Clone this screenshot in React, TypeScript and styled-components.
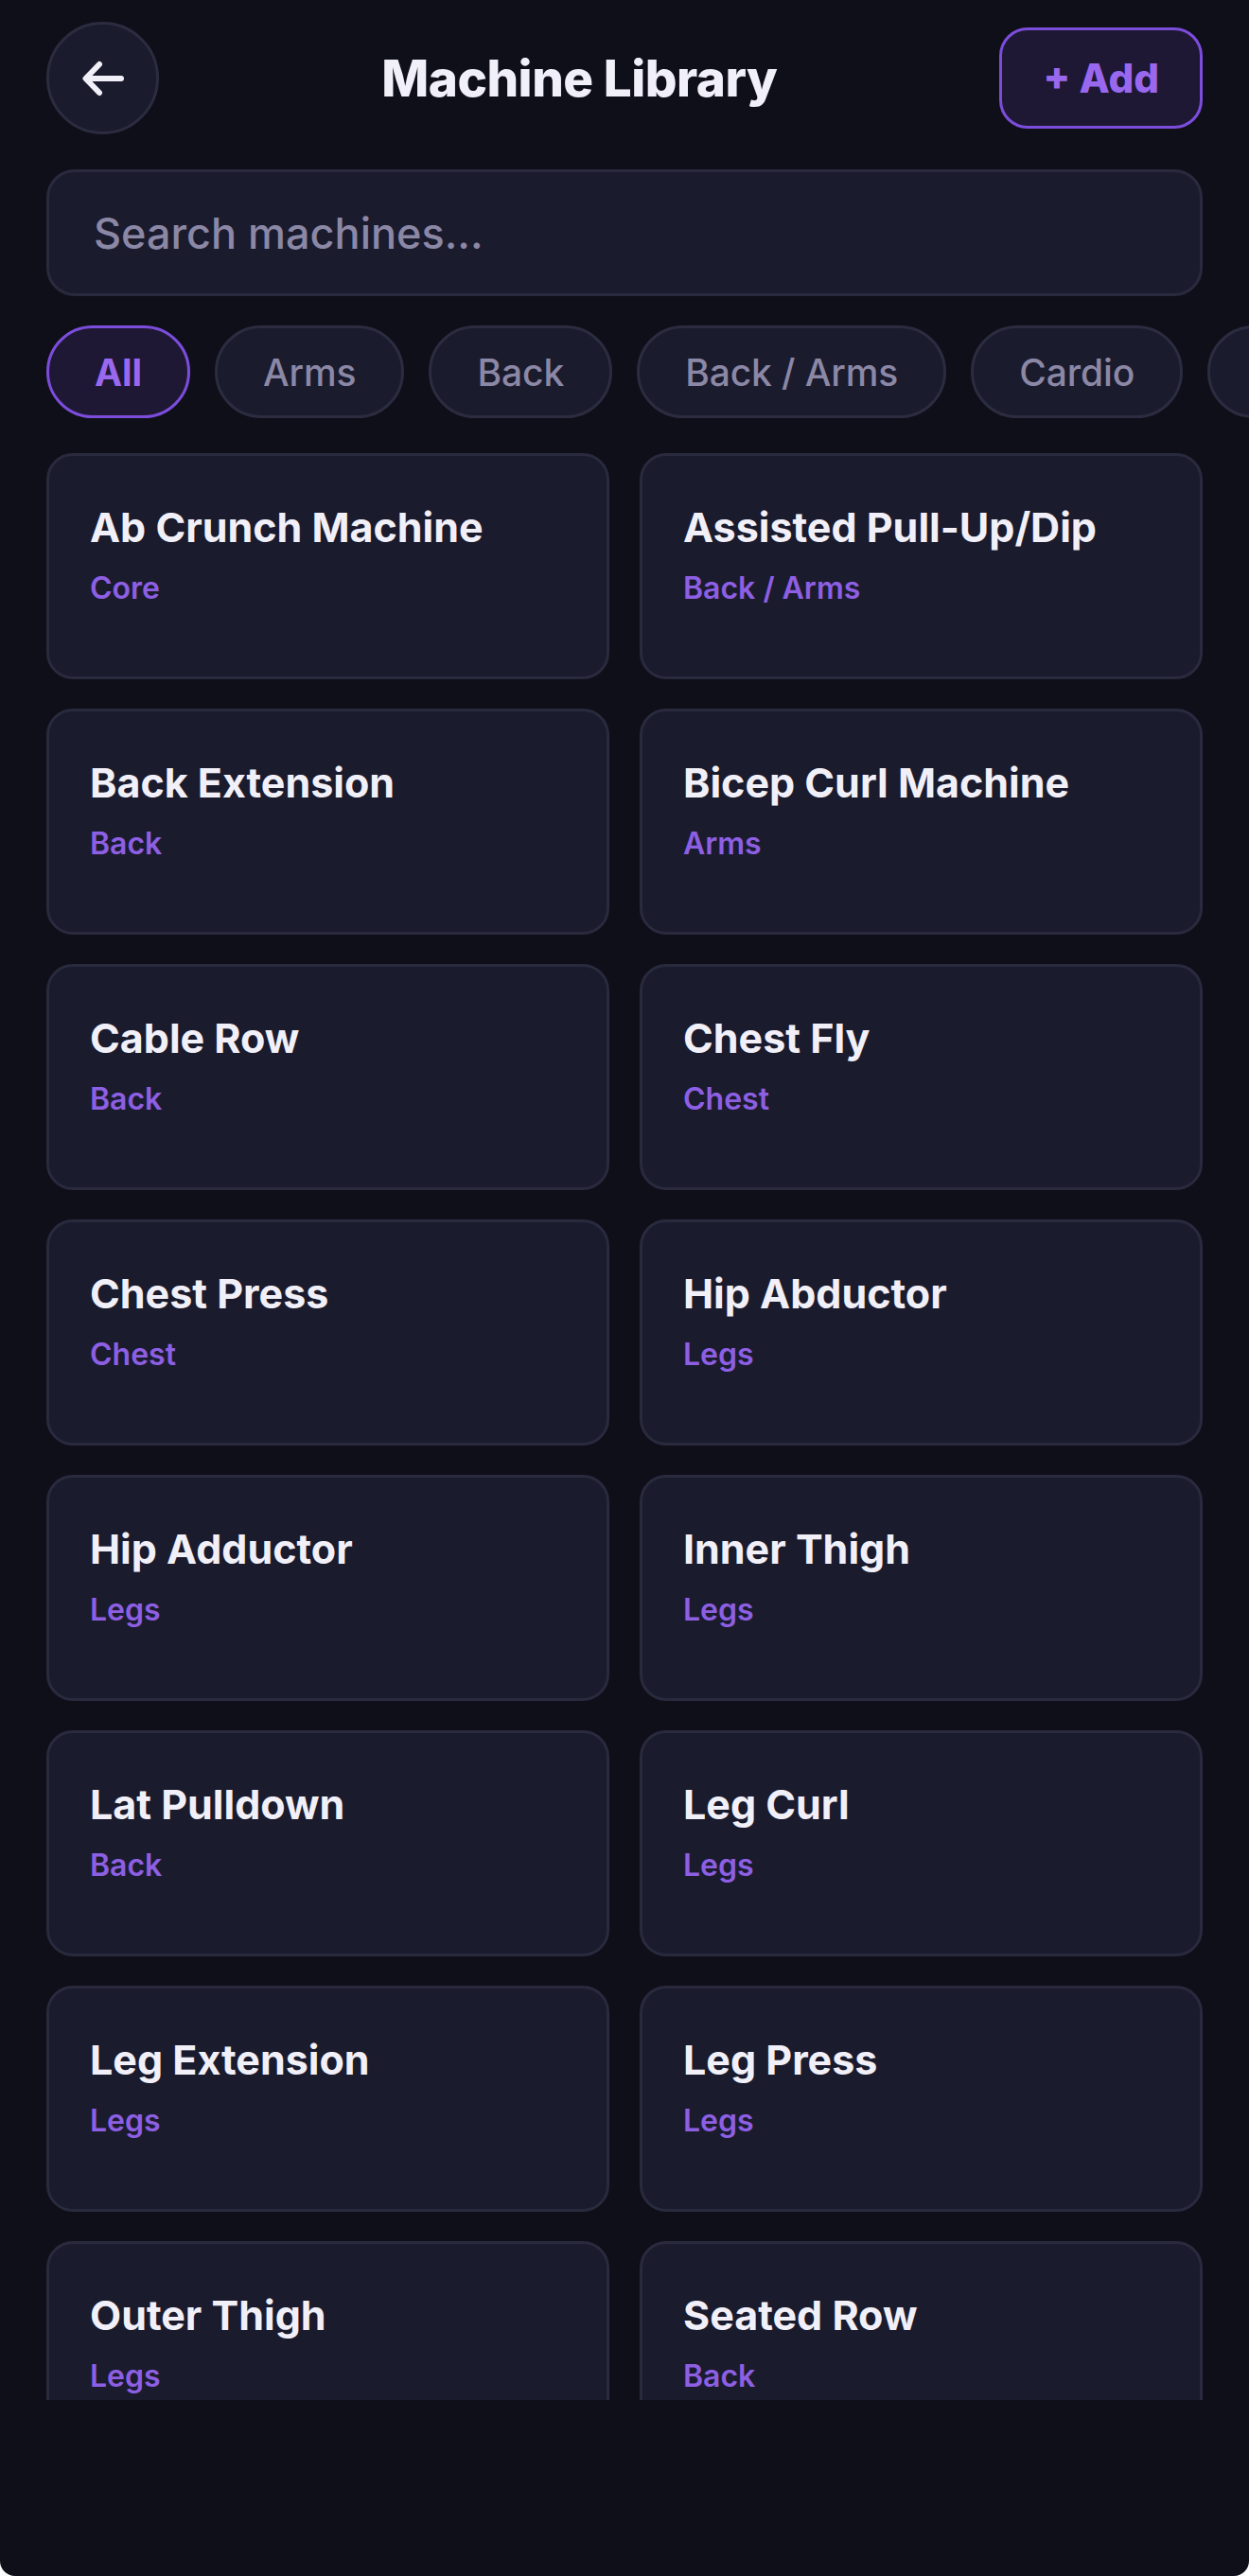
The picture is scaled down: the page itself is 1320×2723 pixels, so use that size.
import React, { useState } from 'react';
import styled, { createGlobalStyle } from 'styled-components';

const GlobalStyle = createGlobalStyle`
  html, body {
    margin: 0;
    padding: 0;
    background: #ffffff;
  }
  * {
    box-sizing: border-box;
  }
`;

const Screen = styled.div`
  width: 1320px;
  height: 2723px;
  background: #0f0f1a;
  border-bottom-left-radius: 16px;
  border-bottom-right-radius: 16px;
  padding: 23px 49px 0;
  font-family: Inter, "Noto Sans", sans-serif;
  overflow: hidden;
`;

const Header = styled.header`
  display: flex;
  align-items: center;
  justify-content: space-between;
  height: 119px;
`;

const BackButton = styled.button`
  width: 119px;
  height: 119px;
  border-radius: 50%;
  background: #1b1b2e;
  border: 3px solid #2c2c40;
  display: flex;
  align-items: center;
  justify-content: center;
  padding: 0;
  cursor: pointer;
`;

const Title = styled.h1`
  margin: 0;
  font-size: 53px;
  font-weight: 800;
  color: #f1f0f8;
  letter-spacing: -0.5px;
`;

const AddButton = styled.button`
  height: 107px;
  padding: 0 43px;
  border-radius: 30px;
  background: #1e1834;
  border: 3px solid #7c4ddb;
  color: #9a68ef;
  font-family: Inter, sans-serif;
  font-size: 42px;
  font-weight: 800;
  cursor: pointer;
`;

const SearchInput = styled.input`
  display: block;
  width: 100%;
  height: 134px;
  margin-top: 37px;
  padding: 0 47px;
  background: #1b1b2e;
  border: 3px solid #2a2a3e;
  border-radius: 30px;
  color: #f1f0f8;
  font-family: Inter, sans-serif;
  font-size: 45px;
  font-weight: 500;
  outline: none;

  &::placeholder {
    color: #8b88a6;
  }
`;

const ChipRow = styled.div`
  display: flex;
  gap: 26px;
  margin: 31px -49px 0;
  padding: 0 49px;
  overflow: hidden;
`;

const Chip = styled.button<{ $active?: boolean }>`
  flex-shrink: 0;
  height: 98px;
  padding: 0 48px;
  border-radius: 49px;
  background: ${p => (p.$active ? '#1e1834' : '#1b1b2e')};
  border: 3px solid ${p => (p.$active ? '#7c4ddb' : '#2c2c40')};
  color: ${p => (p.$active ? '#9a68ef' : '#8b88a6')};
  font-family: Inter, sans-serif;
  font-size: 39px;
  font-weight: ${p => (p.$active ? 700 : 500)};
  letter-spacing: -0.1px;
  cursor: pointer;
`;

const ListViewport = styled.div`
  margin-top: 37px;
  height: 2058px;
  overflow: hidden;
`;

const Grid = styled.div`
  display: grid;
  grid-template-columns: 1fr 1fr;
  column-gap: 32px;
  row-gap: 31px;
`;

const Card = styled.div`
  min-height: 239px;
  padding: 49px 43px;
  background: #1b1b2e;
  border: 3px solid #2a2a3e;
  border-radius: 28px;
`;

const CardName = styled.div`
  font-size: 43px;
  line-height: 1.25;
  font-weight: 700;
  color: #f1f0f8;
`;

const CardGroup = styled.div`
  margin-top: 17px;
  font-size: 32px;
  line-height: 1.25;
  font-weight: 600;
  color: #8d5fe3;
`;

const categories = ['All', 'Arms', 'Back', 'Back / Arms', 'Cardio', 'Chest', 'Core', 'Legs'];

const machines: [string, string][] = [
  ['Ab Crunch Machine', 'Core'],
  ['Assisted Pull-Up/Dip', 'Back / Arms'],
  ['Back Extension', 'Back'],
  ['Bicep Curl Machine', 'Arms'],
  ['Cable Row', 'Back'],
  ['Chest Fly', 'Chest'],
  ['Chest Press', 'Chest'],
  ['Hip Abductor', 'Legs'],
  ['Hip Adductor', 'Legs'],
  ['Inner Thigh', 'Legs'],
  ['Lat Pulldown', 'Back'],
  ['Leg Curl', 'Legs'],
  ['Leg Extension', 'Legs'],
  ['Leg Press', 'Legs'],
  ['Outer Thigh', 'Legs'],
  ['Seated Row', 'Back'],
  ['Shoulder Press', 'Shoulders'],
  ['Smith Machine', 'Full Body'],
];

const ArrowLeft = () => (
  <svg width="46" height="38" viewBox="0 0 46 38" fill="none">
    <path
      d="M42 19H5M19 4L4.5 19L19 34"
      stroke="#f1f0f8"
      strokeWidth="6"
      strokeLinecap="round"
      strokeLinejoin="round"
    />
  </svg>
);

export default function App() {
  const [active, setActive] = useState('All');
  const [query, setQuery] = useState('');

  const shown = machines.filter(([name, group]) => {
    const okGroup = active === 'All' || group === active;
    return okGroup && name.toLowerCase().includes(query.toLowerCase());
  });

  return (
    <>
      <GlobalStyle />
      <Screen>
        <Header>
          <BackButton aria-label="Back">
            <ArrowLeft />
          </BackButton>
          <Title>Machine Library</Title>
          <AddButton>+ Add</AddButton>
        </Header>

        <SearchInput
          placeholder="Search machines..."
          value={query}
          onChange={e => setQuery(e.target.value)}
        />

        <ChipRow>
          {categories.map(c => (
            <Chip key={c} $active={c === active} onClick={() => setActive(c)}>
              {c}
            </Chip>
          ))}
        </ChipRow>

        <ListViewport>
          <Grid>
            {shown.map(([name, group]) => (
              <Card key={name}>
                <CardName>{name}</CardName>
                <CardGroup>{group}</CardGroup>
              </Card>
            ))}
          </Grid>
        </ListViewport>
      </Screen>
    </>
  );
}
